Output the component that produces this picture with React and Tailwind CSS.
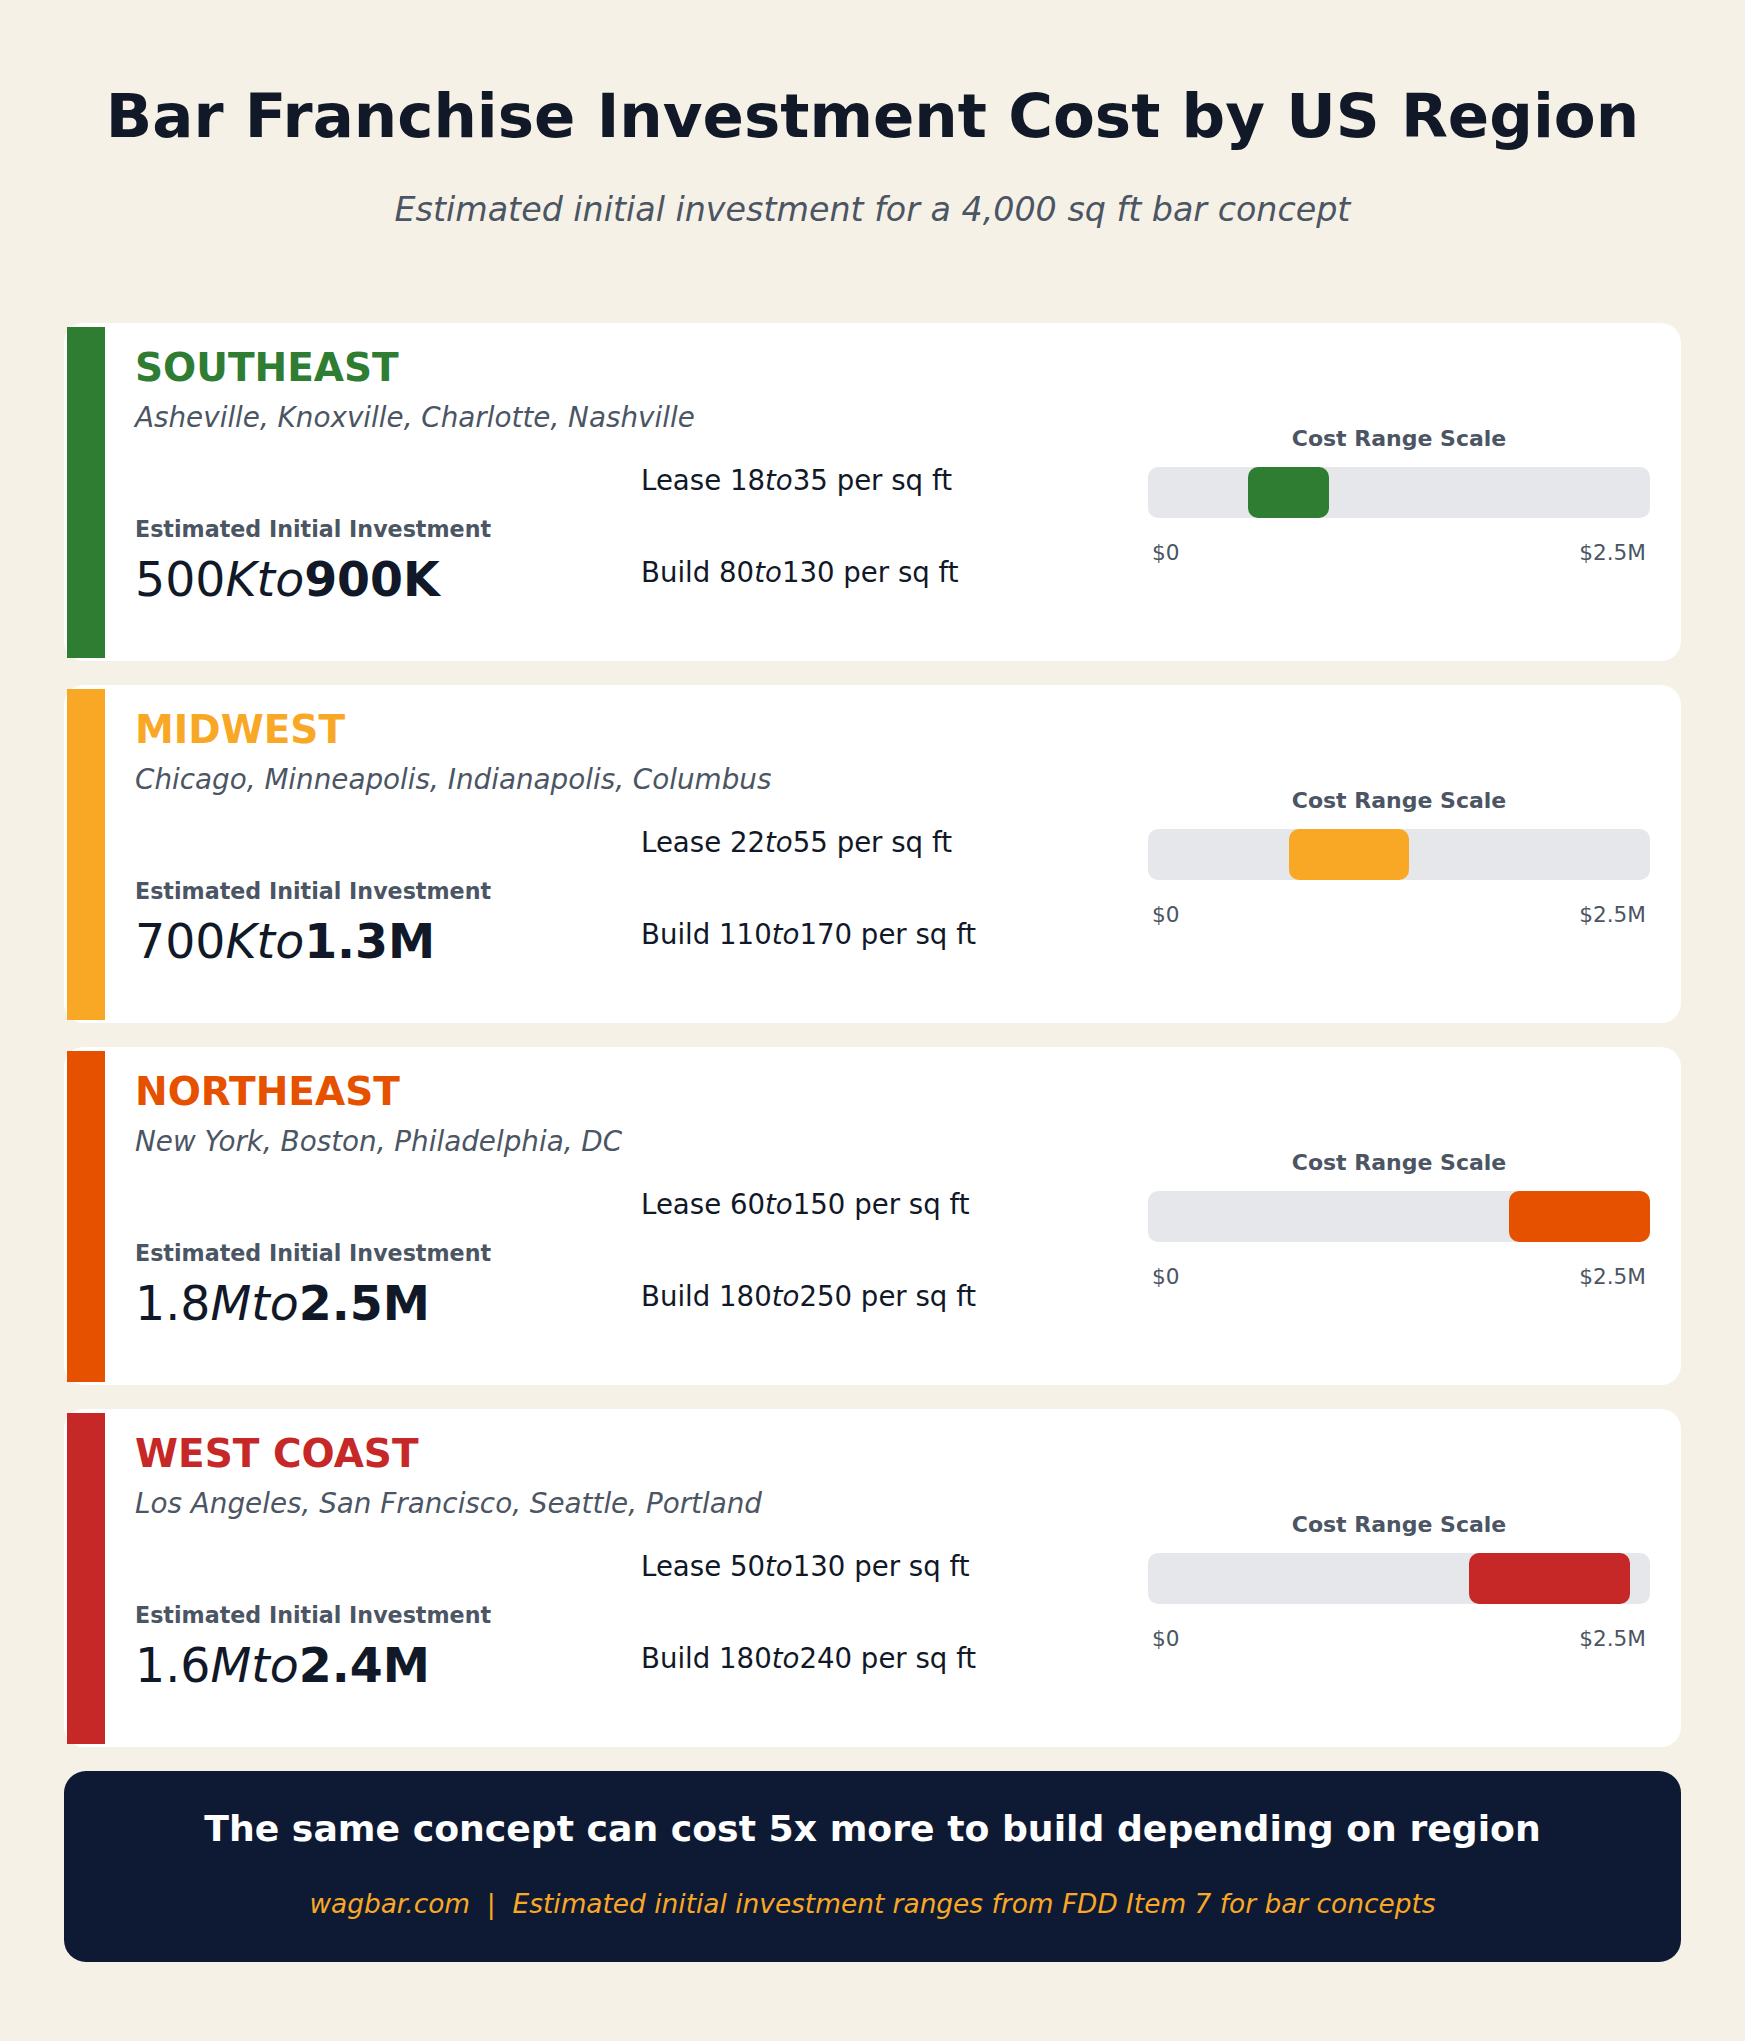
import React from "react";

const regions = [
  {
    name: "SOUTHEAST",
    color: "#2e7d32",
    cities: "Asheville, Knoxville, Charlotte, Nashville",
    lease: ["18", "35"],
    build: ["80", "130"],
    lowText: "500",
    unit: "K",
    highText: "900K",
    low: 0.5,
    high: 0.9,
  },
  {
    name: "MIDWEST",
    color: "#f9a825",
    cities: "Chicago, Minneapolis, Indianapolis, Columbus",
    lease: ["22", "55"],
    build: ["110", "170"],
    lowText: "700",
    unit: "K",
    highText: "1.3M",
    low: 0.7,
    high: 1.3,
  },
  {
    name: "NORTHEAST",
    color: "#e65100",
    cities: "New York, Boston, Philadelphia, DC",
    lease: ["60", "150"],
    build: ["180", "250"],
    lowText: "1.8",
    unit: "M",
    highText: "2.5M",
    low: 1.8,
    high: 2.5,
  },
  {
    name: "WEST COAST",
    color: "#c62828",
    cities: "Los Angeles, San Francisco, Seattle, Portland",
    lease: ["50", "130"],
    build: ["180", "240"],
    lowText: "1.6",
    unit: "M",
    highText: "2.4M",
    low: 1.6,
    high: 2.4,
  },
];

const MAX = 2.5;

function RegionCard({ r }) {
  return (
    <div className="flex rounded-[20px] bg-white">
      <div
        className="ml-[3px] mt-[4px] mb-[3px] w-[38px] shrink-0"
        style={{ backgroundColor: r.color }}
      />
      <div className="flex pl-[30px] pr-[31px]">
        {/* left column */}
        <div className="flex w-[506px] flex-col pt-[22px] pb-[54px]">
          <div
            className="text-[39px] font-bold leading-[45px]"
            style={{ color: r.color }}
          >
            {r.name}
          </div>
          <div className="mt-[12px] whitespace-nowrap text-[27.8px] italic leading-[32px] text-[#4b5563]">
            {r.cities}
          </div>
          <div className="mt-[82px] whitespace-nowrap text-[22.2px] font-bold leading-[26px] text-[#4b5563]">
            Estimated Initial Investment
          </div>
          <div className="mt-[11px] whitespace-nowrap text-[47.4px] leading-[54px] text-[#111827]">
            <span>{r.lowText}</span>
            <span className="italic">{r.unit}to</span>
            <span className="font-bold">{r.highText}</span>
          </div>
        </div>
        {/* middle column */}
        <div className="flex w-[507px] flex-col pt-[142px] text-[27.6px] leading-[32px] text-[#111827]">
          <div className="whitespace-nowrap">
            Lease {r.lease[0]}
            <span className="italic">to</span>
            {r.lease[1]} per sq ft
          </div>
          <div className="mt-[60px] whitespace-nowrap">
            Build {r.build[0]}
            <span className="italic">to</span>
            {r.build[1]} per sq ft
          </div>
        </div>
        {/* right column */}
        <div className="flex w-[502px] flex-col pt-[103px]">
          <div className="text-center text-[22px] font-bold leading-[26px] text-[#4b5563]">
            Cost Range Scale
          </div>
          <div className="relative mt-[15px] h-[51px] w-full rounded-[10px] bg-[#e5e7eb]">
            <div
              className="absolute top-0 h-full rounded-[10px]"
              style={{
                left: `${(r.low / MAX) * 100}%`,
                width: `${((r.high - r.low) / MAX) * 100}%`,
                backgroundColor: r.color,
              }}
            />
          </div>
          <div className="mt-[23px] flex justify-between px-[4px] text-[21.6px] leading-[24px] text-[#4b5563]">
            <span>$0</span>
            <span>$2.5M</span>
          </div>
        </div>
      </div>
    </div>
  );
}

export default function App() {
  return (
    <div
      className="min-h-screen w-full bg-[#f6f1e7] px-[64px] pb-[79px]"
      style={{ fontFamily: '"DejaVu Sans", "Liberation Sans", sans-serif' }}
    >
      <h1 className="pt-[81px] text-center text-[61px] font-bold leading-[70px] text-[#111827]">
        Bar Franchise Investment Cost by US Region
      </h1>
      <p className="mt-[39px] text-center text-[33.3px] italic leading-[40px] text-[#4b5563]">
        Estimated initial investment for a 4,000 sq ft bar concept
      </p>
      <div className="mt-[93px] flex flex-col gap-[24px]">
        {regions.map((r) => (
          <RegionCard key={r.name} r={r} />
        ))}
      </div>
      <div className="mt-[24px] rounded-[22px] bg-[#0e1a33] pt-[37px] pb-[42px] text-center">
        <div className="text-[36.2px] font-bold leading-[42px] text-white">
          The same concept can cost 5x more to build depending on region
        </div>
        <div className="mt-[38px] text-[26.4px] italic leading-[32px] text-[#f9a825]">
          wagbar.com{"\u00a0\u00a0"}|{"\u00a0\u00a0"}Estimated initial investment ranges from FDD Item 7 for bar concepts
        </div>
      </div>
    </div>
  );
}
